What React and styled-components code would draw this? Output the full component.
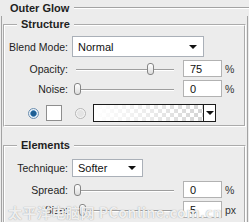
import React from "react";
import styled, { createGlobalStyle } from "styled-components";

const GlobalStyle = createGlobalStyle`
  html, body { margin: 0; padding: 0; background: #ececec; }
  * { box-sizing: border-box; }
`;

const Panel = styled.div`
  position: relative;
  width: 249px;
  height: 222px;
  overflow: hidden;
  background: #ececec;
  font-family: "Liberation Sans", Arial, sans-serif;
  font-size: 10.5px;
  color: #1e1e1e;
`;

const TitleRow = styled.div`
  display: flex;
  align-items: center;
  height: 16px;
  padding-left: 10px;
`;

const Title = styled.span`
  font-weight: bold;
  font-size: 11px;
  margin-right: 5px;
`;

const Etch = styled.div`
  flex: 1;
  height: 2px;
  border-top: 1px solid #a3a3a3;
  border-bottom: 1px solid #ffffff;
`;

const Frame = styled.div`
  margin: 0 1px;
  height: 206px;
  border-left: 1px solid #a3a3a3;
  border-right: 1px solid #a3a3a3;
  padding-top: 2px;
`;

const Group = styled.fieldset`
  margin: ${(p) => p.$top}px 1px 0 1px;
  padding: ${(p) => p.$pt}px 0 ${(p) => p.$pb}px 0;
  border: 2px groove #ffffff;
  min-width: 0;
`;

const Legend = styled.legend`
  margin-left: 12px;
  padding: 0 4px;
  font-weight: bold;
  font-size: 11px;
  line-height: 13px;
`;

const Row = styled.div`
  display: flex;
  align-items: center;
  height: ${(p) => p.$h}px;
  margin-top: ${(p) => p.$gap || 0}px;
`;

const Label = styled.span`
  width: 63px;
  text-align: right;
  white-space: nowrap;
`;

const Select = styled.div`
  display: flex;
  align-items: center;
  justify-content: space-between;
  margin-left: 4px;
  width: ${(p) => p.$w}px;
  height: ${(p) => p.$h}px;
  padding: 0 6px 0 5px;
  background: #fff;
  border: 1px solid #aab0b8;
  font-size: 11px;
  color: #111;
`;

const Caret = styled.span`
  width: 0;
  height: 0;
  border-left: 4px solid transparent;
  border-right: 4px solid transparent;
  border-top: 4px solid #111;
`;

const Slider = styled.div`
  position: relative;
  margin-left: 6px;
  width: 100px;
  height: 12px;
`;

const Track = styled.div`
  position: absolute;
  left: 2px;
  right: 0;
  top: 6px;
  height: 2px;
  border-top: 1px solid #9e9e9e;
  border-bottom: 1px solid #ffffff;
`;

const Thumb = styled.div`
  position: absolute;
  top: 0;
  width: 7px;
  height: 12px;
  border: 1px solid #858585;
  border-radius: 3px 3px 3px 3px;
  background: linear-gradient(#ffffff, #dcdcdc);
`;

const Field = styled.div`
  margin-left: 9px;
  width: 39px;
  height: 17px;
  padding-left: 6px;
  background: #fff;
  border: 1px solid #b2b2b2;
  display: flex;
  align-items: center;
  font-size: 11px;
  color: #111;
`;

const Unit = styled.span`
  margin-left: 3px;
  font-size: 10.5px;
  color: #333;
`;

const Radio = styled.span`
  margin-left: ${(p) => p.$ml}px;
  width: 11px;
  height: 11px;
  border-radius: 50%;
  border: 1px solid ${(p) => (p.$on ? "#6d8fb0" : "#b6b6b6")};
  background: ${(p) =>
    p.$on
      ? "radial-gradient(circle, #1f5f94 0 2.5px, #5b96c8 3px, #e8f0f7 3.6px)"
      : "radial-gradient(circle, #e4e4e4 0 3px, #f6f6f6 4px)"};
`;

const Swatch = styled.span`
  margin-left: 7px;
  width: 16px;
  height: 16px;
  background: #fff;
  border: 1px solid #8e8e8e;
`;

const Gradient = styled.div`
  margin-left: 7px;
  width: 123px;
  height: 18px;
  display: flex;
  border: 1px solid #1c1c1c;
  background:
    linear-gradient(to right, #ffffff 0%, rgba(255, 255, 255, 0.6) 45%, rgba(255, 255, 255, 0) 100%),
    repeating-conic-gradient(#cfcfcf 0 25%, #ffffff 0 50%) 0 0 / 8px 8px;
`;

const GradientArrow = styled.div`
  margin-left: auto;
  width: 12px;
  border-left: 1px solid #1c1c1c;
  background: #fff;
  display: flex;
  align-items: center;
  justify-content: center;
`;

const Watermark = styled.div`
  position: absolute;
  left: 8px;
  top: 202px;
  font-family: "Noto Sans CJK SC", "Liberation Sans", sans-serif;
  font-size: 14px;
  font-weight: bold;
  letter-spacing: 0.5px;
  color: rgba(255, 255, 255, 0.85);
  text-shadow: 0 0 1px rgba(120, 120, 120, 0.8);
  white-space: nowrap;
  pointer-events: none;
`;

const SliderRow = ({ label, value, unit, gap }) => (
  <Row $h={17} $gap={gap}>
    <Label>{label}</Label>
    <Slider>
      <Track />
      <Thumb style={{ left: `${value * 0.97}px` }} />
    </Slider>
    <Field>{value}</Field>
    <Unit>{unit}</Unit>
  </Row>
);

export default function App() {
  return (
    <Panel>
      <GlobalStyle />
      <TitleRow>
        <Title>Outer Glow</Title>
        <Etch />
      </TitleRow>
      <Frame>
        <Group $top={0} $pt={5} $pb={3}>
          <Legend>Structure</Legend>
          <Row $h={21}>
            <Label>Blend Mode:</Label>
            <Select $w={132} $h={21}>
              Normal
              <Caret />
            </Select>
          </Row>
          <SliderRow label="Opacity:" value={75} unit="%" gap={3} />
          <SliderRow label="Noise:" value={0} unit="%" gap={3} />
          <Row $h={18} $gap={7}>
            <Radio $on $ml={23} />
            <Swatch />
            <Radio $ml={13} />
            <Gradient>
              <GradientArrow>
                <Caret />
              </GradientArrow>
            </Gradient>
          </Row>
        </Group>
        <Group $top={12} $pt={7} $pb={4}>
          <Legend>Elements</Legend>
          <Row $h={18}>
            <Label>Technique:</Label>
            <Select $w={71} $h={18}>
              Softer
              <Caret />
            </Select>
          </Row>
          <SliderRow label="Spread:" value={0} unit="%" gap={4} />
          <SliderRow label="Size:" value={5} unit="px" gap={3} />
        </Group>
      </Frame>
      <Watermark>太平洋电脑网 PConline.com.cn</Watermark>
    </Panel>
  );
}
